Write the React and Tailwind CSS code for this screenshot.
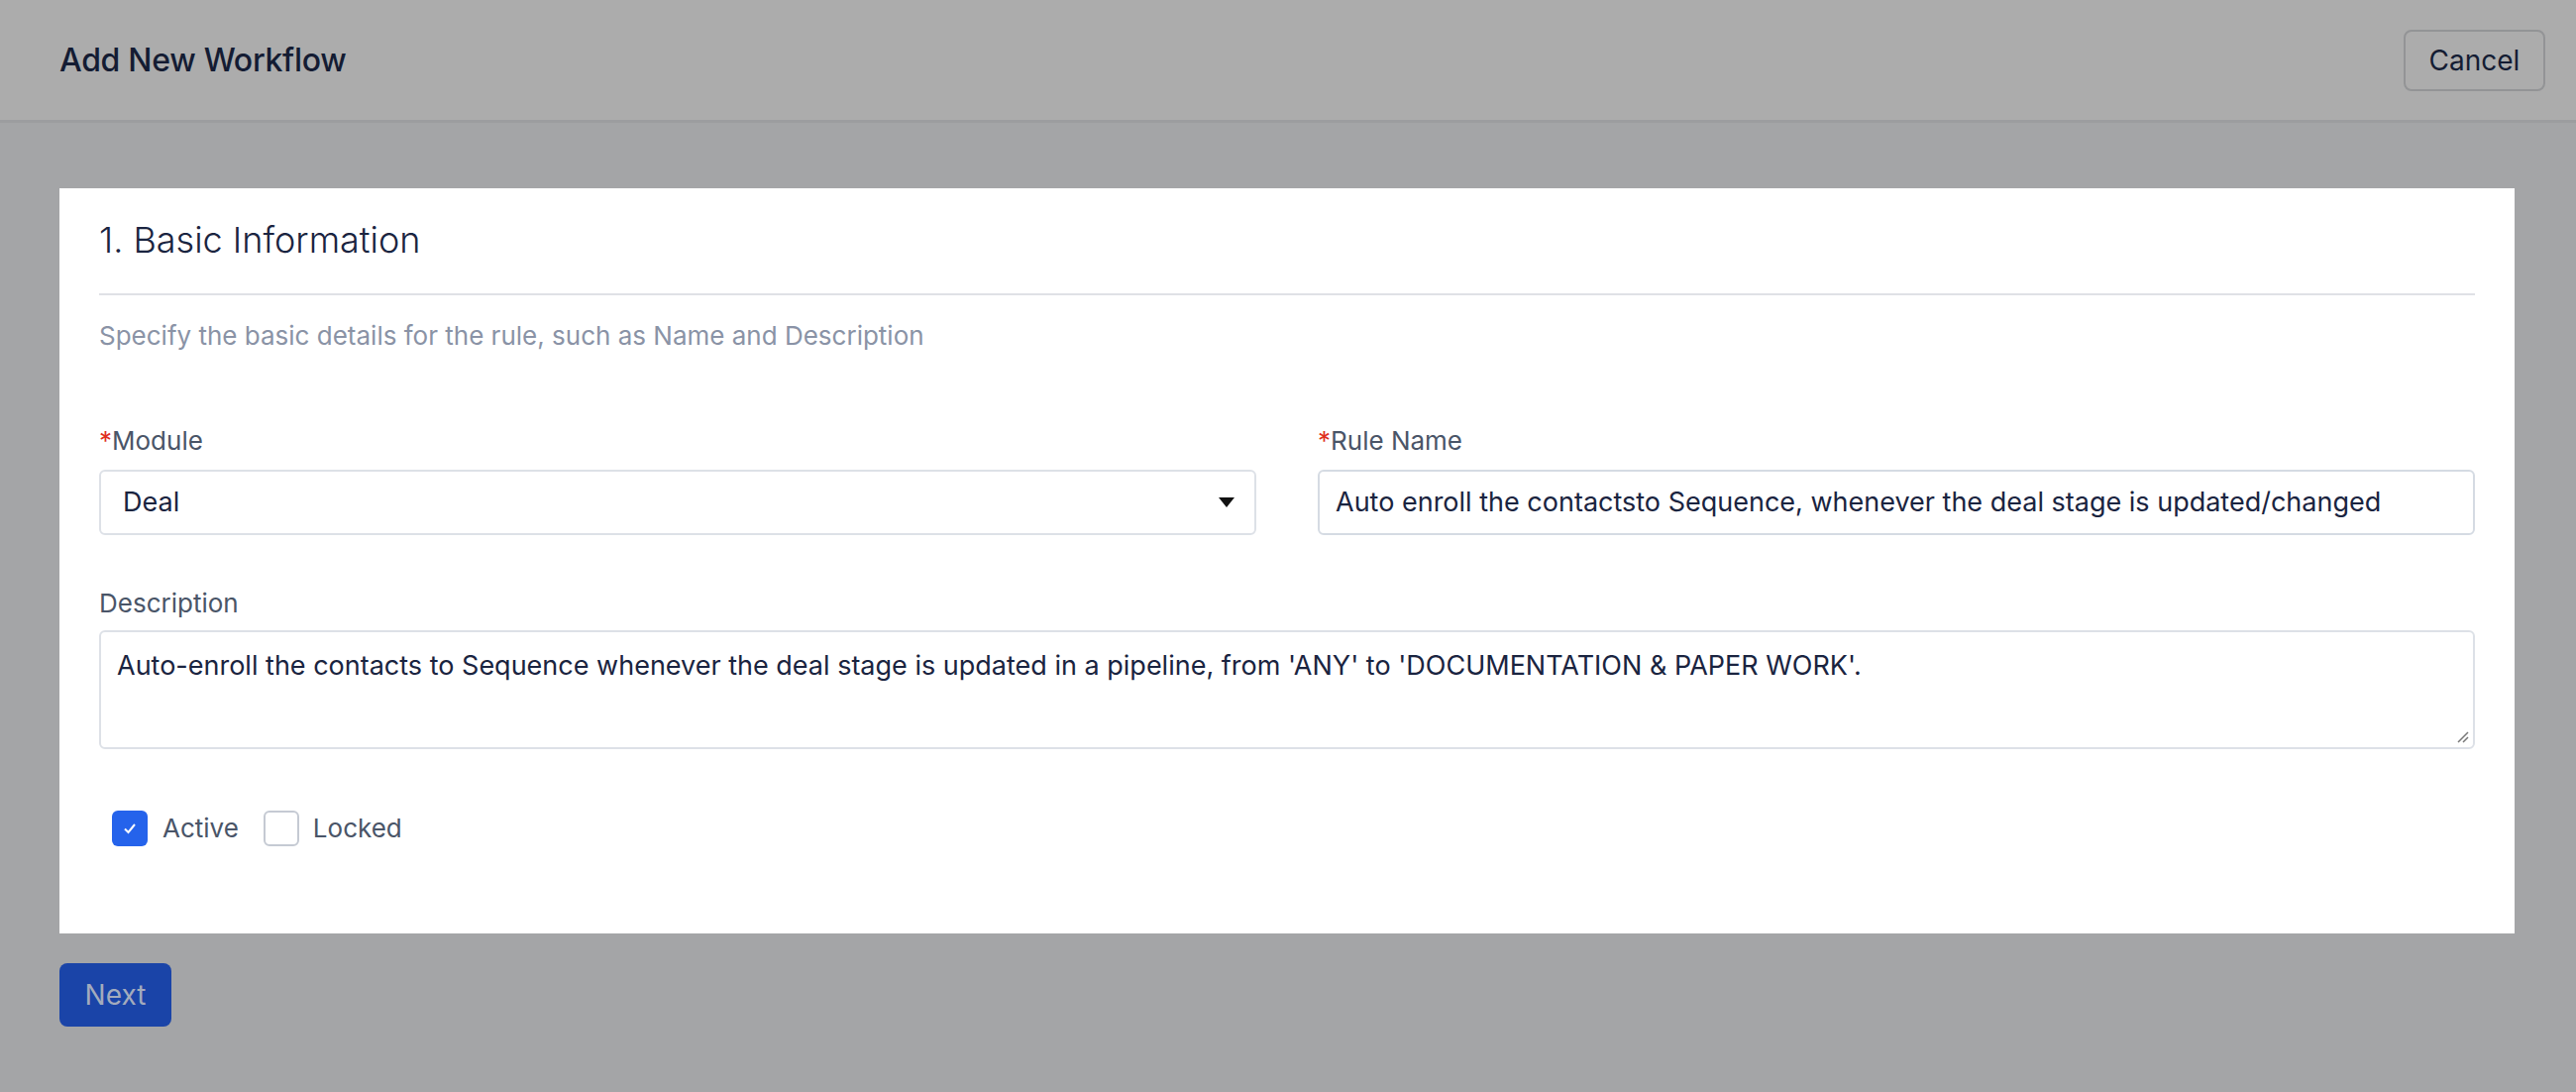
export default function App() {
  return (
    <div className="w-[2600px] h-[1102px] bg-[#a4a5a7] overflow-hidden" style={{ fontFamily: 'Inter, "Noto Sans", sans-serif' }}>
      <div className="h-[124px] bg-[#acacac] border-b-[3px] border-[#9c9d9f] flex items-center justify-between pl-[60px] pr-[31px]">
        <div className="text-[32px] font-medium text-[#141c33] tracking-[-0.3px]">Add New Workflow</div>
        <button className="h-[62px] w-[143px] rounded-[8px] border-2 border-[#939496] text-[28px] text-[#141c33]">Cancel</button>
      </div>
      <div className="pt-[66px] px-[60px]">
        <div className="bg-white w-[2478px] h-[752px] px-[40px] pt-[228px] relative" style={{ paddingTop: 0 }}>
          <div className="pt-[30px] h-[68px] text-[36px] font-light text-[#1a2440] leading-[44px]">1. Basic Information</div>
          <div className="h-[2px] bg-[#dfe1e6] mt-[38px]"></div>
          <div className="mt-[24px] text-[26px] text-[#8a93a6] leading-[34px]">Specify the basic details for the rule, such as Name and Description</div>
          <div className="mt-[72px] grid grid-cols-2 gap-[62px]">
            <div>
              <div className="text-[26px] text-[#4a5568] leading-[34px]"><span className="text-[#e0301e]">*</span>Module</div>
              <div className="mt-[12px] h-[66px] border-2 border-[#dde1e7] rounded-[6px] flex items-center justify-between pl-[22px] pr-[20px] text-[27px] text-[#1a2440]">
                <span>Deal</span>
                <svg width="16" height="10" viewBox="0 0 16 10"><path d="M0 0h16L8 10z" fill="#111" /></svg>
              </div>
            </div>
            <div>
              <div className="text-[26px] text-[#4a5568] leading-[34px]"><span className="text-[#e0301e]">*</span>Rule Name</div>
              <div className="mt-[12px] h-[66px] border-2 border-[#d5dbe3] rounded-[6px] flex items-center pl-[16px] text-[27px] text-[#1a2440]">
                Auto enroll the contactsto Sequence, whenever the deal stage is updated/changed
              </div>
            </div>
          </div>
          <div className="mt-[52px] text-[26px] text-[#4a5568] leading-[34px]">Description</div>
          <div className="mt-[10px] h-[120px] border-2 border-[#dde1e7] rounded-[6px] px-[16px] pt-[14px] text-[27px] text-[#1a2440] relative">
            Auto-enroll the contacts to Sequence whenever the deal stage is updated in a pipeline, from 'ANY' to 'DOCUMENTATION &amp; PAPER WORK'.
            <svg className="absolute right-[4px] bottom-[4px]" width="14" height="14" viewBox="0 0 14 14"><path d="M13 3L3 13M13 8L8 13" stroke="#777" strokeWidth="1.5" /></svg>
          </div>
          <div className="mt-[60px] flex items-center pl-[13px] text-[26px] text-[#4a5568]">
            <div className="w-[36px] h-[36px] rounded-[6px] bg-[#2563eb] flex items-center justify-center">
              <svg width="18" height="18" viewBox="0 0 18 18"><path d="M4 9.5l3.5 3.5L14 5" stroke="white" strokeWidth="2" fill="none" /></svg>
            </div>
            <span className="ml-[15px]">Active</span>
            <div className="ml-[25px] w-[36px] h-[36px] rounded-[6px] border-2 border-[#c5cad3] bg-white"></div>
            <span className="ml-[14px]">Locked</span>
          </div>
        </div>
        <button className="mt-[30px] w-[113px] h-[64px] rounded-[8px] bg-[#1a44a8] text-[28px] text-[#a3abbd]">Next</button>
      </div>
    </div>
  );
}
